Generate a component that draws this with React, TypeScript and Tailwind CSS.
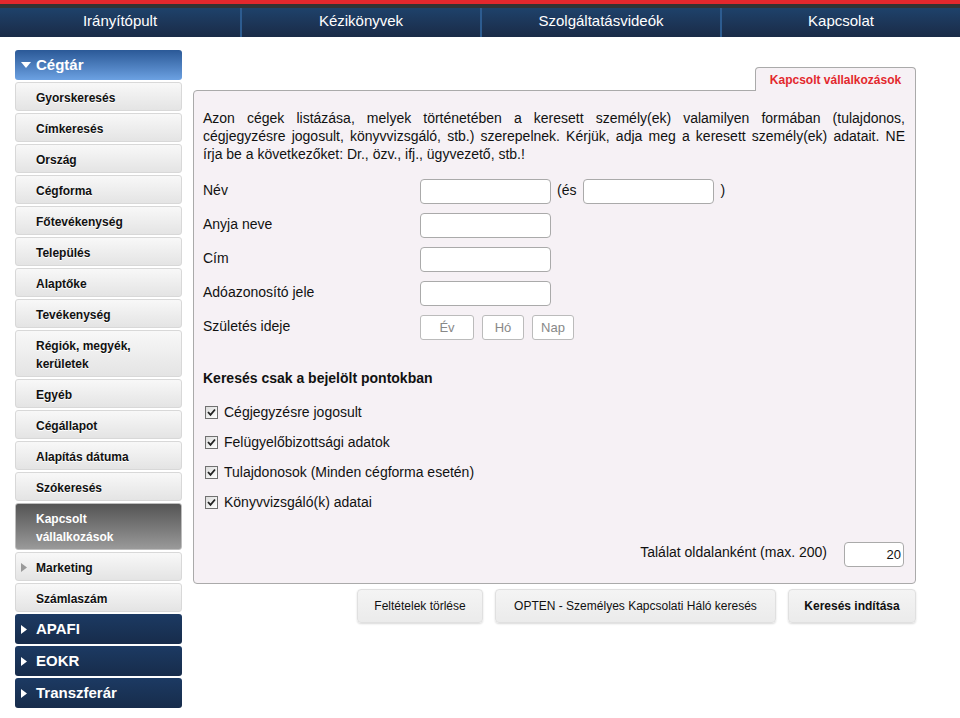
import React from "react";

const menu: { label: string; lines?: number; active?: boolean; arrow?: boolean }[] = [
  { label: "Gyorskeresés" },
  { label: "Címkeresés" },
  { label: "Ország" },
  { label: "Cégforma" },
  { label: "Főtevékenység" },
  { label: "Település" },
  { label: "Alaptőke" },
  { label: "Tevékenység" },
  { label: "Régiók, megyék, kerületek", lines: 2 },
  { label: "Egyéb" },
  { label: "Cégállapot" },
  { label: "Alapítás dátuma" },
  { label: "Szókeresés" },
  { label: "Kapcsolt vállalkozások", lines: 2, active: true },
  { label: "Marketing", arrow: true },
  { label: "Számlaszám" },
];

const fields = ["Név", "Anyja neve", "Cím", "Adóazonosító jele"];

const checks = [
  "Cégjegyzésre jogosult",
  "Felügyelőbizottsági adatok",
  "Tulajdonosok (Minden cégforma esetén)",
  "Könyvvizsgáló(k) adatai",
];

const RightTri = ({ color }: { color: string }) => (
  <svg width="6" height="9" viewBox="0 0 6 9" className="shrink-0">
    <path d="M0 0 L6 4.5 L0 9 Z" fill={color} />
  </svg>
);

const BlueHeader = ({ label }: { label: string }) => (
  <div className="h-[30px] flex items-center pl-[6px] gap-[6px] rounded-[3px] bg-gradient-to-b from-[#1c3a63] to-[#172c4b] text-white font-bold text-[15px]">
    <RightTri color="#ffffff" />
    <span className="ml-[3px]">{label}</span>
  </div>
);

const CheckBox = () => (
  <span className="w-[13px] h-[13px] border border-[#707070] bg-gradient-to-br from-[#dcdcdc] to-[#ffffff] flex items-center justify-center shrink-0">
    <svg width="9" height="9" viewBox="0 0 9 9">
      <path d="M1 4 L3.5 6.8 L8 1.5" stroke="#222" strokeWidth="1.8" fill="none" />
    </svg>
  </span>
);

const btn =
  "h-[34px] flex items-center justify-center bg-gradient-to-b from-[#f4f4f4] to-[#ebebeb] border border-[#e0e0e0] rounded-[4px] shadow-[0_1px_2px_rgba(0,0,0,0.15)]";

export default function App() {
  return (
    <div className="w-[960px] h-[718px] bg-white font-['Liberation_Sans',Arial,sans-serif] text-[#111] overflow-hidden">
      <div className="h-[4px] bg-[#e3282d]" />
      <div className="h-[4px] bg-[#333333]" />
      <div className="h-[29px] grid grid-cols-4 bg-gradient-to-b from-[#1e426b] to-[#1a2b47] text-white text-[15px]">
        {["Irányítópult", "Kézikönyvek", "Szolgáltatásvideók", "Kapcsolat"].map((t, i) => (
          <div
            key={t}
            className={
              "flex items-center justify-center pb-[2px] " + (i > 0 ? "border-l-2 border-[#2d5c90]" : "")
            }
          >
            {t}
          </div>
        ))}
      </div>

      <div className="flex pt-[13px] pl-[15px]">
        {/* sidebar */}
        <div className="w-[167px] flex flex-col gap-[2px]">
          <div className="h-[30px] flex items-center pl-[6px] rounded-[3px] bg-gradient-to-b from-[#2b5997] to-[#6ca1e2] text-white font-bold text-[15px]">
            <svg width="10" height="7" viewBox="0 0 10 7">
              <path d="M0 0 L10 0 L5 6 Z" fill="#fff" />
            </svg>
            <span className="ml-[5px]">Cégtár</span>
          </div>
          {menu.map((m) => (
            <div
              key={m.label}
              className={
                "flex items-center border rounded-[3px] text-[12px] font-bold leading-[18px] pt-[6px] pb-[4px] " +
                (m.lines === 2 ? "h-[47px] " : "h-[29px] ") +
                (m.active
                  ? "bg-gradient-to-b from-[#555555] to-[#9a9a9a] border-[#bdbdbd] text-white"
                  : "bg-gradient-to-b from-[#f8f8f8] to-[#e4e4e4] border-[#d8d8d8] text-[#111] [text-shadow:0_1px_0_#fff]")
              }
            >
              {m.arrow ? (
                <span className="pl-[5px] pr-[9px] flex">
                  <RightTri color="#9a9a9a" />
                </span>
              ) : (
                <span className="w-[20px] shrink-0" />
              )}
              <span className={m.lines === 2 ? "w-[110px]" : ""}>{m.label}</span>
            </div>
          ))}
          <BlueHeader label="APAFI" />
          <BlueHeader label="EOKR" />
          <BlueHeader label="Transzferár" />
        </div>

        {/* main */}
        <div className="w-[723px] ml-[11px] pt-[17px]">
          <div className="flex justify-end">
            <div className="h-[24px] w-[161px] -mb-px relative z-10 bg-[#f6f1f5] border border-b-0 border-[#aaaaaa] rounded-t-[4px] flex items-center justify-center text-[12px] font-bold text-[#e3282d]">
              Kapcsolt vállalkozások
            </div>
          </div>
          <div className="h-[494px] bg-[#f6f1f5] border border-[#aaaaaa] rounded-b-[4px] rounded-tl-[4px] pt-[18px] pl-[9px] pr-[10px] text-[14px] flex flex-col">
            <div className="leading-[18px]">
              <div className="text-justify [text-align-last:justify]">
                Azon cégek listázása, melyek történetében a keresett személy(ek) valamilyen formában (tulajdonos,
              </div>
              <div className="text-justify [text-align-last:justify]">
                cégjegyzésre jogosult, könyvvizsgáló, stb.) szerepelnek. Kérjük, adja meg a keresett személy(ek) adatait. NE
              </div>
              <div>írja be a következőket: Dr., özv., ifj., ügyvezető, stb.!</div>
            </div>

            <div className="mt-[16px] flex flex-col gap-[9px]">
              {fields.map((f, i) => (
                <div key={f} className="flex items-center h-[25px]">
                  <span className="w-[217px] -mt-[3px]">{f}</span>
                  <span className="w-[131px] h-[25px] bg-white border border-[#aaaaaa] rounded-[4px]" />
                  {i === 0 && (
                    <>
                      <span className="ml-[6px] mr-[7px] -mt-[2px]">(és</span>
                      <span className="w-[131px] h-[25px] bg-white border border-[#aaaaaa] rounded-[4px]" />
                      <span className="ml-[6px] -mt-[2px]">)</span>
                    </>
                  )}
                </div>
              ))}
              <div className="flex items-center h-[25px]">
                <span className="w-[217px] -mt-[3px]">Születés ideje</span>
                <span className="w-[54px] h-[25px] bg-white border border-[#bbbbbb] rounded-[3px] text-[13px] text-[#888] flex items-center justify-center">
                  Év
                </span>
                <span className="ml-[8px] w-[42px] h-[25px] bg-white border border-[#bbbbbb] rounded-[3px] text-[13px] text-[#888] flex items-center justify-center">
                  Hó
                </span>
                <span className="ml-[8px] w-[42px] h-[25px] bg-white border border-[#bbbbbb] rounded-[3px] text-[13px] text-[#888] flex items-center justify-center">
                  Nap
                </span>
              </div>
            </div>

            <div className="mt-[29px] font-bold leading-[18px]">Keresés csak a bejelölt pontokban</div>

            <div className="mt-[10px] flex flex-col">
              {checks.map((c) => (
                <div key={c} className="h-[30px] flex items-center pl-[2px] gap-[6px]">
                  <CheckBox />
                  <span>{c}</span>
                </div>
              ))}
            </div>

            <div className="mt-auto mb-[16px] flex items-center justify-end pr-[1px]">
              <span className="-mt-[4px]">Találat oldalanként (max. 200)</span>
              <span className="ml-[17px] w-[60px] h-[25px] bg-white border border-[#aaaaaa] rounded-[4px] flex items-center justify-end pr-[2px] text-[13px]">
                20
              </span>
            </div>
          </div>

          <div className="mt-[5px] flex justify-end gap-[12px] text-[12px] text-[#111]">
            <div className={btn + " w-[126px]"}>Feltételek törlése</div>
            <div className={btn + " w-[281px]"}>OPTEN - Személyes Kapcsolati Háló keresés</div>
            <div className={btn + " w-[128px] font-bold"}>Keresés indítása</div>
          </div>
        </div>
      </div>
    </div>
  );
}
